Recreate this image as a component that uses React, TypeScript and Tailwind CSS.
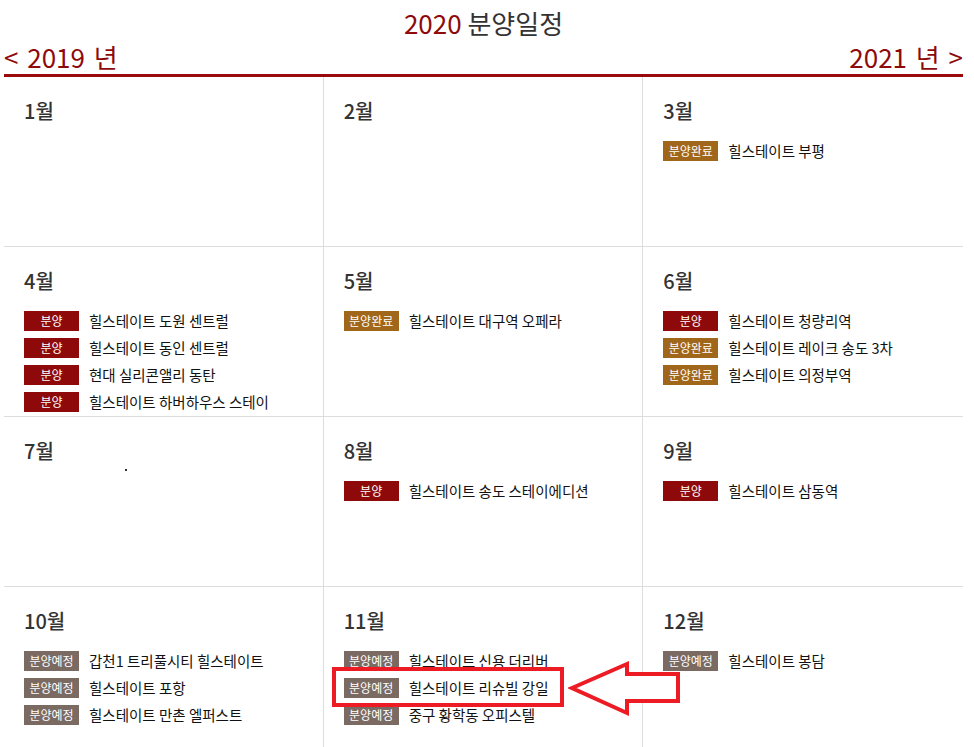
import React from 'react';

type Status = '분양' | '분양완료' | '분양예정';

type Item = { status: Status; name: string };

const badgeColor: Record<Status, string> = {
  분양: 'bg-[#8e0a0a]',
  분양완료: 'bg-[#a0661a]',
  분양예정: 'bg-[#7a6a62]',
};

const months: { label: string; items: Item[]; dot?: boolean }[] = [
  { label: '1월', items: [] },
  { label: '2월', items: [] },
  { label: '3월', items: [{ status: '분양완료', name: '힐스테이트 부평' }] },
  {
    label: '4월',
    items: [
      { status: '분양', name: '힐스테이트 도원 센트럴' },
      { status: '분양', name: '힐스테이트 동인 센트럴' },
      { status: '분양', name: '현대 실리콘앨리 동탄' },
      { status: '분양', name: '힐스테이트 하버하우스 스테이' },
    ],
  },
  { label: '5월', items: [{ status: '분양완료', name: '힐스테이트 대구역 오페라' }] },
  {
    label: '6월',
    items: [
      { status: '분양', name: '힐스테이트 청량리역' },
      { status: '분양완료', name: '힐스테이트 레이크 송도 3차' },
      { status: '분양완료', name: '힐스테이트 의정부역' },
    ],
  },
  { label: '7월', items: [], dot: true },
  { label: '8월', items: [{ status: '분양', name: '힐스테이트 송도 스테이에디션' }] },
  { label: '9월', items: [{ status: '분양', name: '힐스테이트 삼동역' }] },
  {
    label: '10월',
    items: [
      { status: '분양예정', name: '갑천1 트리풀시티 힐스테이트' },
      { status: '분양예정', name: '힐스테이트 포항' },
      { status: '분양예정', name: '힐스테이트 만촌 엘퍼스트' },
    ],
  },
  {
    label: '11월',
    items: [
      { status: '분양예정', name: '힐스테이트 신용 더리버' },
      { status: '분양예정', name: '힐스테이트 리슈빌 강일' },
      { status: '분양예정', name: '중구 황학동 오피스텔' },
    ],
  },
  { label: '12월', items: [{ status: '분양예정', name: '힐스테이트 봉담' }] },
];

export default function App() {
  return (
    <div className="relative min-h-screen bg-white font-['Noto_Sans_CJK_KR','Noto_Sans',sans-serif] text-[#222]">
      <div className="ml-[4px] w-[959px]">
        {/* Header */}
        <h1 className="pt-[6px] text-center text-[26px] leading-[34px] text-[#333]">
          <span className="text-[#8e0a0a]">2020</span> 분양일정
        </h1>
        <div className="flex h-[37px] items-center justify-between border-b-[3px] border-[#9a0a0a] text-[26px] leading-[34px] text-[#8e0a0a] [word-spacing:3px]">
          <a href="#">&lt; 2019 년</a>
          <a href="#">2021 년 &gt;</a>
        </div>

        {/* Calendar */}
        <div className="grid grid-cols-3">
          {months.map((m, i) => (
            <div
              key={m.label}
              className={`relative h-[170px] border-b border-[#dddddd] px-[20px] pt-[19px] ${
                i % 3 !== 2 ? 'border-r' : ''
              }`}
            >
              <h2 className="text-[20px] font-medium leading-[30px] text-[#333]">{m.label}</h2>
              <ul className="mt-[15px] flex flex-col gap-[7px]">
                {m.items.map((it) => (
                  <li key={it.name} className="flex h-[20px] items-center">
                    <span
                      className={`flex h-[20px] w-[55px] shrink-0 items-center justify-center text-[12px] text-white ${badgeColor[it.status]}`}
                    >
                      {it.status}
                    </span>
                    <span className="ml-[10px] whitespace-nowrap text-[14.5px] text-[#111]">{it.name}</span>
                  </li>
                ))}
              </ul>
              {m.dot && <span className="absolute left-[121px] top-[52px] h-[2px] w-[2px] bg-[#333]" />}
            </div>
          ))}
        </div>
      </div>

      {/* Annotation overlay */}
      <div className="absolute left-[332px] top-[667px] h-[40px] w-[232px] border-[4px] border-[#ed1c24]" />
      <svg className="absolute left-[568px] top-[660px]" width="116" height="58" viewBox="0 0 116 58">
        <polygon
          points="4,28 59,4 59,14 110,14 110,41 59,41 59,53"
          fill="white"
          stroke="#ed1c24"
          strokeWidth="4"
          strokeLinejoin="miter"
        />
      </svg>
    </div>
  );
}
